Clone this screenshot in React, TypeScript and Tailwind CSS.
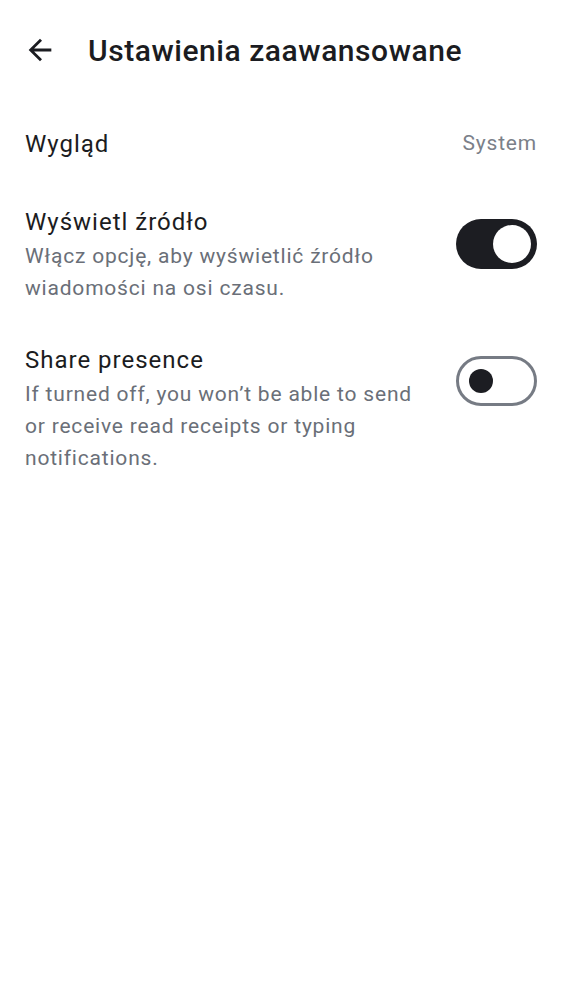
function BackArrow() {
  return (
    <svg viewBox="0 0 24 24" className="h-[34px] w-[34px] shrink-0" fill="#1b1c21">
      <path d="M20 11H7.83l5.59-5.59L12 4l-8 8 8 8 1.41-1.41L7.83 13H20v-2z" />
    </svg>
  );
}

function Toggle({ on }: { on: boolean }) {
  return on ? (
    <div className="flex h-[50px] w-[81px] shrink-0 items-center justify-end rounded-full bg-[#1c1d22] px-[6px]">
      <div className="h-[38px] w-[38px] rounded-full bg-white" />
    </div>
  ) : (
    <div className="flex h-[50px] w-[81px] shrink-0 items-center rounded-full border-[3px] border-[#767b84] bg-white px-[10px]">
      <div className="h-[24px] w-[24px] rounded-full bg-[#1c1d22]" />
    </div>
  );
}

export default function App() {
  return (
    <div className="min-h-[1000px] bg-white text-[#1b1c21]" style={{ fontFamily: 'Roboto, "Noto Sans", sans-serif' }}>
      <header className="flex h-[100px] items-center pl-[23px]">
        <BackArrow />
        <h1 className="ml-[31px] text-[30px] font-medium tracking-[0.55px]">Ustawienia zaawansowane</h1>
      </header>

      <div className="flex h-[88px] items-center justify-between px-[25px]">
        <span className="text-[24px] tracking-[1px]">Wygląd</span>
        <span className="text-[21px] tracking-[0.8px] text-[#7b8089]">System</span>
      </div>

      <div className="flex items-start justify-between gap-[31px] px-[25px] pt-[17px]">
        <div className="flex flex-1 flex-col">
          <span className="text-[24px] leading-[35px] tracking-[1px]">Wyświetl źródło</span>
          <span className="text-[21px] leading-[32px] tracking-[0.8px] text-[#6a6f78]">
            Włącz opcję, aby wyświetlić źródło wiadomości na osi czasu.
          </span>
        </div>
        <div className="pt-[14px]">
          <Toggle on />
        </div>
      </div>

      <div className="flex items-start justify-between gap-[31px] px-[25px] pt-[39px]">
        <div className="flex flex-1 flex-col">
          <span className="text-[24px] leading-[35px] tracking-[1px]">Share presence</span>
          <span className="text-[21px] leading-[32px] tracking-[0.8px] text-[#6a6f78]">
            If turned off, you won’t be able to send or receive read receipts or typing notifications.
          </span>
        </div>
        <div className="pt-[13px]">
          <Toggle on={false} />
        </div>
      </div>
    </div>
  );
}
